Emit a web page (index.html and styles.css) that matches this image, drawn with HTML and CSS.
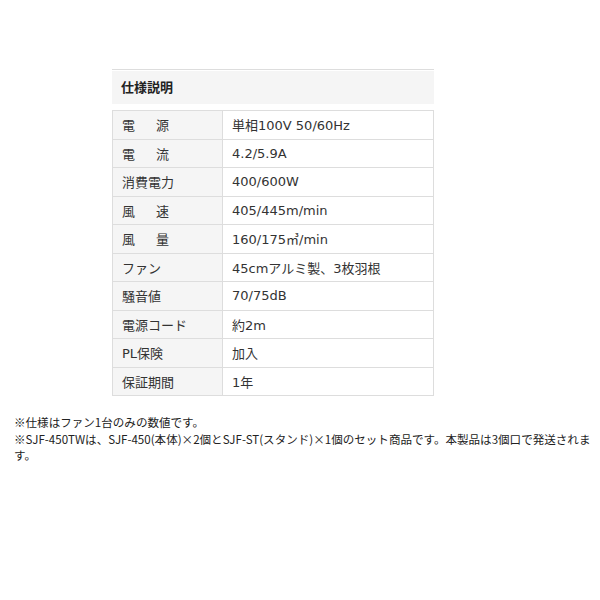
FILE: index.html
```html
<!DOCTYPE html>
<html lang="ja">
<head>
  <meta charset="UTF-8">
  <title>仕様説明</title>
  <link rel="stylesheet" href="styles.css">
</head>
<body>
  <div class="spec">
    <h2 class="spec-title">仕様説明</h2>
    <table class="spec-table">
      <tr><th>電<span class="gap"></span>源</th><td>単相100V 50/60Hz</td></tr>
      <tr><th>電<span class="gap"></span>流</th><td>4.2/5.9A</td></tr>
      <tr><th>消費電力</th><td>400/600W</td></tr>
      <tr><th>風<span class="gap"></span>速</th><td>405/445m/min</td></tr>
      <tr><th>風<span class="gap"></span>量</th><td>160/175㎥/min</td></tr>
      <tr><th>ファン</th><td>45cmアルミ製、3枚羽根</td></tr>
      <tr><th>騒音値</th><td>70/75dB</td></tr>
      <tr><th>電源コード</th><td>約2m</td></tr>
      <tr><th>PL保険</th><td>加入</td></tr>
      <tr><th>保証期間</th><td>1年</td></tr>
    </table>
  </div>
  <div class="notes">
    <p>※仕様はファン1台のみの数値です。</p>
    <p>※SJF-450TWは、SJF-450(本体)×2個とSJF-ST(スタンド)×1個のセット商品です。本製品は3個口で発送されます。</p>
  </div>
</body>
</html>
```

FILE: styles.css
```css
body {
  margin: 0;
  background: #fff;
  color: #333;
  font-family: "DejaVu Sans", "Noto Sans CJK JP", sans-serif;
}
.spec {
  width: 322px;
  margin: 69px 0 0 112px;
  border-top: 1px solid #ddd;
  padding-top: 1px;
}
.spec-title {
  margin: 0 0 6px;
  height: 33px;
  line-height: 33px;
  padding-left: 9px;
  background: #f5f5f5;
  font-size: 13px;
  font-weight: bold;
  color: #222;
}
.spec-table {
  width: 322px;
  border-collapse: collapse;
  font-size: 13px;
}
.spec-table th,
.spec-table td {
  height: 27.5px;
  padding: 0 9px;
  border: 1px solid #ddd;
  text-align: left;
  font-weight: normal;
  vertical-align: middle;
}
.spec-table th {
  width: 91px;
  background: #f5f5f5;
}
.gap {
  display: inline-block;
  width: 21px;
}
.notes {
  width: 584px;
  margin: 18px 0 0 14px;
  font-size: 11.55px;
  line-height: 16.5px;
  color: #222;
  font-family: "Noto Sans CJK JP", sans-serif;
}
.notes p {
  margin: 0;
}
```
